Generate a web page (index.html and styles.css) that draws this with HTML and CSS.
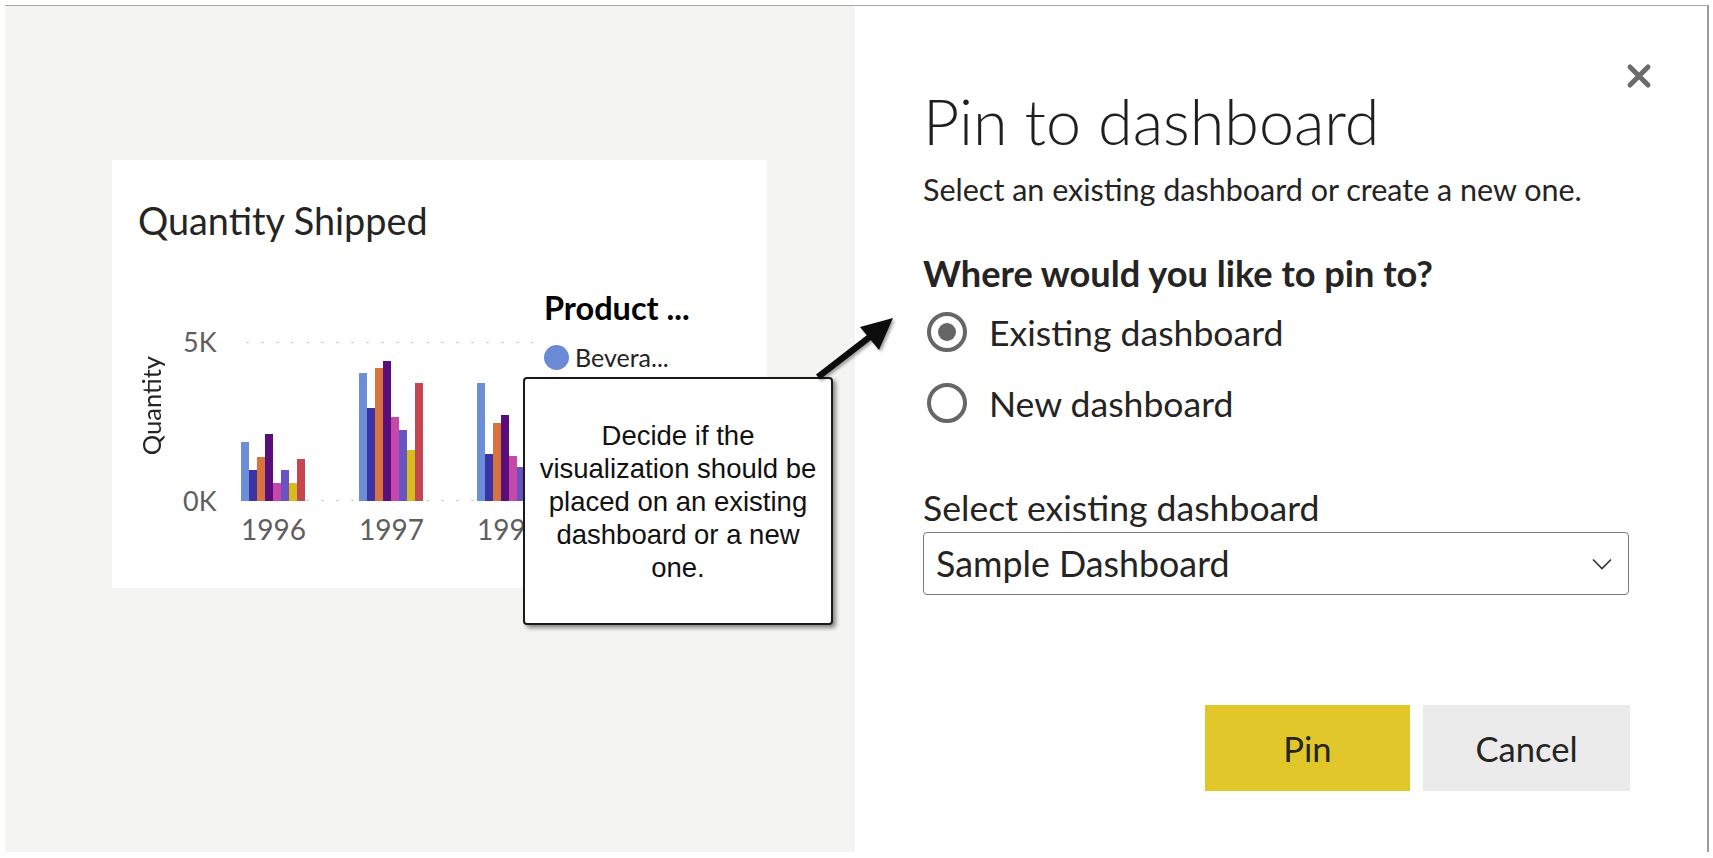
FILE: index.html
```html
<!DOCTYPE html>
<html lang="en">
<head>
<meta charset="utf-8">
<title>Pin to dashboard</title>
<link rel="stylesheet" href="styles.css">
</head>
<body>
<div class="frame">
  <section class="canvas">
    <div class="card">
      <h2 class="card-title">Quantity Shipped</h2>
      <div class="chart">
        <div class="axis-title">Quantity</div>
        <div class="ticks"><span>5K</span><span>0K</span></div>
        <div class="plot-col">
          <div class="plot">
            <div class="group">
              <i class="bar c1" style="height:59px"></i><i class="bar c2" style="height:31px"></i><i class="bar c3" style="height:44px"></i><i class="bar c4" style="height:67px"></i><i class="bar c5" style="height:18px"></i><i class="bar c6" style="height:31px"></i><i class="bar c7" style="height:18px"></i><i class="bar c8" style="height:42px"></i>
            </div>
            <div class="group">
              <i class="bar c1" style="height:128px"></i><i class="bar c2" style="height:93px"></i><i class="bar c3" style="height:133px"></i><i class="bar c4" style="height:140px"></i><i class="bar c5" style="height:84px"></i><i class="bar c6" style="height:71px"></i><i class="bar c7" style="height:51px"></i><i class="bar c8" style="height:118px"></i>
            </div>
            <div class="group">
              <i class="bar c1" style="height:118px"></i><i class="bar c2" style="height:47px"></i><i class="bar c3" style="height:78px"></i><i class="bar c4" style="height:86px"></i><i class="bar c5" style="height:45px"></i><i class="bar c6" style="height:34px"></i><i class="bar c7" style="height:20px"></i><i class="bar c8" style="height:60px"></i>
            </div>
          </div>
          <div class="years"><span>1996</span><span>1997</span><span>1998</span></div>
        </div>
        <div class="legend">
          <div class="legend-title">Product ...</div>
          <div class="legend-item"><span class="dot"></span>Bevera...</div>
        </div>
      </div>
    </div>
    <div class="callout">Decide if the<br>visualization should be<br>placed on an existing<br>dashboard or a new<br>one.</div>
  </section>

  <section class="dialog">
    <div class="close-row">
      <span class="close" aria-label="Close">
        <svg width="26" height="26" viewBox="0 0 26 26"><path d="M4 4 L22 22 M22 4 L4 22" stroke="#6b6b6b" stroke-width="5" stroke-linecap="round" fill="none"/></svg>
      </span>
    </div>
    <h1 class="title">Pin to dashboard</h1>
    <p class="subtitle">Select an existing dashboard or create a new one.</p>
    <h3 class="question">Where would you like to pin to?</h3>
    <div class="radios">
      <label class="radio"><span class="ring checked"></span>Existing dashboard</label>
      <label class="radio"><span class="ring"></span>New dashboard</label>
    </div>
    <div class="field-label">Select existing dashboard</div>
    <div class="select">
      <span>Sample Dashboard</span>
      <svg width="20" height="12" viewBox="0 0 20 12"><path d="M1 1.5 L10 10.5 L19 1.5" stroke="#333" stroke-width="1.6" fill="none"/></svg>
    </div>
    <div class="actions">
      <button class="btn primary">Pin</button>
      <button class="btn secondary">Cancel</button>
    </div>
  </section>

  <svg class="arrow" width="100" height="85" viewBox="0 0 100 85">
    <defs>
      <filter id="sh" x="-20%" y="-20%" width="150%" height="150%">
        <feDropShadow dx="2" dy="2" stdDeviation="1.5" flood-color="#000" flood-opacity="0.35"/>
      </filter>
    </defs>
    <g filter="url(#sh)">
      <path d="M13 72 L66 31" stroke="#111" stroke-width="6.5" fill="none"/>
      <path d="M88 13 L55 22 L74 45 Z" fill="#111"/>
    </g>
  </svg>
</div>
</body>
</html>
```

FILE: styles.css
```css
* { box-sizing: border-box; }

html, body {
  margin: 0;
  padding: 0;
  background: #ffffff;
}

body {
  font-family: Lato, "Open Sans", sans-serif;
  color: #252423;
}

.frame {
  position: relative;
  margin: 5px 0 0 5px;
  width: 1704px;
  height: 847px;
  border-top: 1px solid #a8a8a8;
  border-right: 2px solid #9c9c9c;
  display: flex;
}

/* ---------- left canvas ---------- */
.canvas {
  position: relative;
  width: 850px;
  flex: none;
  background: #f4f4f3;
  padding: 154px 0 0 107px;
}

.card {
  width: 655px;
  height: 428px;
  background: #ffffff;
  padding: 41px 0 0 26px;
}

.card-title {
  margin: 0;
  font-weight: 400;
  font-size: 37.8px;
  line-height: 40px;
  color: #252423;
}

.chart {
  display: flex;
  align-items: flex-start;
  margin: 49px 0 0 2px;
}

.axis-title {
  width: 22px;
  margin-top: 66px;
  writing-mode: vertical-rl;
  transform: rotate(180deg);
  font-size: 25.5px;
  line-height: 22px;
  color: #252423;
}

.ticks {
  width: 32px;
  margin: 37px 0 0 21px;
  height: 189px;
  display: flex;
  flex-direction: column;
  justify-content: space-between;
  font-size: 27px;
  line-height: 30px;
  color: #605e5c;
}

.plot-col {
  width: 295px;
  margin: 52px 0 0 25px;
}

.plot {
  height: 159px;
  display: flex;
  align-items: flex-end;
  gap: 54px;
  padding-left: 1px;
  background-image:
    radial-gradient(circle, #c9c9c9 1px, transparent 1.6px),
    radial-gradient(circle, #c9c9c9 1px, transparent 1.6px);
  background-size: 15px 4px, 15px 4px;
  background-position: 0 -2px, 0 calc(100% + 2px);
  background-repeat: repeat-x;
}

.group {
  display: flex;
  align-items: flex-end;
  width: 64px;
  flex: none;
}

.bar {
  display: block;
  width: 8px;
  flex: none;
}

.c1 { background: #6b8ed6; }
.c2 { background: #3a33a5; }
.c3 { background: #d8733e; }
.c4 { background: #5a0e7c; }
.c5 { background: #c748ab; }
.c6 { background: #6953c2; }
.c7 { background: #d6bc1c; }
.c8 { background: #c4464f; }

.years {
  display: flex;
  gap: 54px;
  padding-left: 1px;
  margin-top: 14px;
  font-size: 28px;
  line-height: 28px;
  color: #605e5c;
}

.years span {
  width: 64px;
  flex: none;
  text-align: center;
}

.legend {
  margin: 3px 0 0 9px;
}

.legend-title {
  font-weight: 700;
  font-size: 32.5px;
  line-height: 30px;
  color: #000;
  white-space: nowrap;
}

.legend-item {
  display: flex;
  align-items: center;
  gap: 6px;
  margin-top: 19px;
  font-size: 25px;
  line-height: 30px;
  color: #252423;
}

.dot {
  width: 25px;
  height: 25px;
  border-radius: 50%;
  background: #6a8ad6;
  flex: none;
}

.callout {
  position: absolute;
  left: 518px;
  top: 371px;
  width: 310px;
  height: 248px;
  background: #fff;
  border: 2px solid #1a1a1a;
  border-radius: 4px;
  box-shadow: 3px 3px 4px rgba(0, 0, 0, 0.45);
  display: flex;
  align-items: center;
  justify-content: center;
  text-align: center;
  font-family: "Liberation Sans", Arial, sans-serif;
  font-size: 27.5px;
  line-height: 33px;
  color: #111;
}

/* ---------- dialog ---------- */
.dialog {
  flex: 1;
  display: flex;
  flex-direction: column;
  padding: 0 78px 0 68px;
  background: #fff;
}

.close-row {
  height: 84px;
  display: flex;
  justify-content: flex-end;
  margin-right: -23px;
}

.close {
  display: block;
  width: 26px;
  height: 26px;
  margin-top: 57px;
}

.close svg { display: block; }

.title {
  margin: 0;
  font-weight: 300;
  font-size: 62.8px;
  line-height: 62px;
  color: #201f1e;
}

.subtitle {
  margin: 24px 0 0;
  font-size: 30.5px;
  line-height: 27px;
  color: #252423;
}

.question {
  margin: 55px 0 0;
  font-weight: 700;
  font-size: 36.2px;
  line-height: 30px;
  color: #252423;
}

.radios {
  margin-top: 24px;
  display: flex;
  flex-direction: column;
  gap: 31px;
}

.radio {
  display: flex;
  align-items: center;
  gap: 22px;
  height: 40px;
  font-size: 35.6px;
  color: #252423;
  margin-left: 4px;
}

.ring {
  width: 40px;
  height: 40px;
  border-radius: 50%;
  border: 4px solid #666;
  flex: none;
  display: flex;
  align-items: center;
  justify-content: center;
}

.ring.checked::after {
  content: "";
  width: 18px;
  height: 18px;
  border-radius: 50%;
  background: #666;
}

.field-label {
  margin-top: 69px;
  font-size: 35.6px;
  line-height: 32px;
  color: #252423;
}

.select {
  margin-top: 8px;
  height: 63px;
  border: 1.5px solid #7a7a7a;
  border-radius: 4px;
  display: flex;
  align-items: center;
  justify-content: space-between;
  padding: 0 16px 0 12px;
  font-size: 35.8px;
  color: #252423;
}

.select svg { display: block; }

.actions {
  margin-top: 110px;
  display: flex;
  justify-content: flex-end;
  gap: 13px;
  margin-right: -1px;
}

.btn {
  height: 86px;
  border: none;
  border-radius: 0;
  font-family: Lato, "Open Sans", sans-serif;
  font-size: 34.6px;
  color: #252423;
  padding: 0;
}

.btn.primary {
  width: 205px;
  background: #e2c72b;
}

.btn.secondary {
  width: 207px;
  background: #ebebeb;
}

.arrow {
  position: absolute;
  left: 800px;
  top: 299px;
  overflow: visible;
}
```
